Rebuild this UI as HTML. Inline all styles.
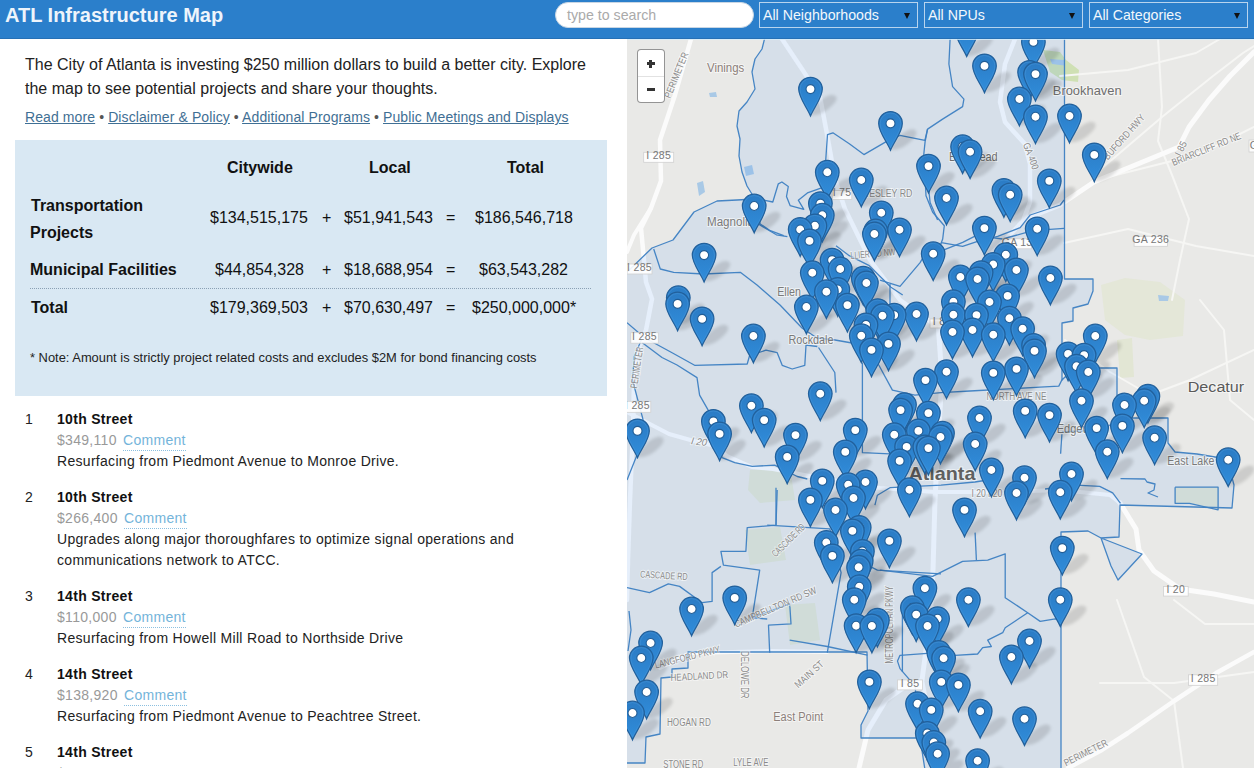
<!DOCTYPE html>
<html><head><meta charset="utf-8">
<style>
*{box-sizing:border-box;margin:0;padding:0}
html,body{width:1254px;height:768px;overflow:hidden;background:#fff;font-family:"Liberation Sans",sans-serif;color:#222}
#hdr{position:absolute;left:0;top:0;width:1254px;height:39px;background:#2b7fcb;z-index:5}
#title{position:absolute;left:5px;top:3px;font-size:20px;font-weight:bold;color:#eef4fb;line-height:24px}
#search{position:absolute;left:555px;top:2px;width:199px;height:26px;border-radius:13px;background:#fff;border:1px solid #c9d6e3;color:#aaa;font-size:14.2px;line-height:24px;padding-left:11px}
.sel{position:absolute;top:2px;height:26px;border:1px solid #b8d4ee;color:#f2f7fc;font-size:14.2px;line-height:24px;padding-left:3px}
.sel b{position:absolute;right:7px;top:10px;width:0;height:0;border-left:3.5px solid transparent;border-right:3.5px solid transparent;border-top:6.5px solid #111}
#left{position:absolute;left:0;top:39px;width:627px;height:729px;overflow:hidden;background:#fff}
#intro{position:absolute;left:25px;top:14px;width:580px;font-size:16px;line-height:24px;color:#222}
#links{position:absolute;left:25px;top:69px;font-size:14px;line-height:18px;color:#555;letter-spacing:0.1px}
#links a{color:#3f6f94;text-decoration:underline}
#tbox{position:absolute;left:15px;top:101px;width:592px;height:256px;background:#d9e8f3}
.t{position:absolute;font-size:16px;line-height:20px;color:#111;white-space:nowrap;margin-top:1.5px}
.tb{font-weight:bold}
#dots{position:absolute;left:15px;top:148px;width:561px;height:0;border-top:1px dotted #8aa0b4}
#note{position:absolute;left:15px;top:210px;font-size:12.9px;color:#222;white-space:nowrap}
.item{position:absolute;left:25px;margin-top:1px;font-size:14px;letter-spacing:0.3px;line-height:21px;color:#222;white-space:nowrap}
.item .n{position:absolute;left:0;top:0}
.item .c{position:absolute;left:32px;top:0}
.item .nm{font-weight:bold;color:#111}
.item .pr{color:#999}
.item .cm{color:#74b4da;border-bottom:1px dotted #8cc0e0;padding-bottom:2px;margin-left:2px}
#map{position:absolute;left:627px;top:39px;width:627px;height:729px;overflow:hidden;background:#e4e4e2}
#zc{position:absolute;left:10px;top:10px;width:28px;height:54px;background:#fff;border:1px solid rgba(0,0,0,0.42);border-radius:4px}
#zc .dv{position:absolute;left:0;top:26px;width:26px;height:1px;background:#e2e2e2}
#zc .h{position:absolute;background:#333;width:8px;height:2.6px}
#zc .v{position:absolute;background:#333;width:2.6px;height:8px}
#hdr:after{content:"";position:absolute;left:0;bottom:0;width:1254px;height:1px;background:#2670b5}
#mtop{position:absolute;left:0;top:0;width:627px;height:1px;background:#d4ecfa;opacity:0.8}

</style></head><body>
<div id="hdr">
  <div id="title">ATL Infrastructure Map</div>
  <div id="search">type to search</div>
  <div class="sel" style="left:759px;width:159px">All Neighborhoods<b></b></div>
  <div class="sel" style="left:924px;width:159px">All NPUs<b></b></div>
  <div class="sel" style="left:1089px;width:159px">All Categories<b></b></div>
</div>
<div id="left">
  <div id="intro">The City of Atlanta is investing $250 million dollars to build a better city. Explore the map to see potential projects and share your thoughts.</div>
  <div id="links"><a>Read more</a> &bull; <a>Disclaimer &amp; Policy</a> &bull; <a>Additional Programs</a> &bull; <a>Public Meetings and Displays</a></div>
  <div id="tbox">
    <div class="t tb" style="left:212px;top:16.5px">Citywide</div>
    <div class="t tb" style="left:354px;top:16.5px">Local</div>
    <div class="t tb" style="left:492px;top:16.5px">Total</div>
    <div class="t tb" style="left:16px;top:54px">Transportation</div>
    <div class="t tb" style="left:15px;top:81px">Projects</div>
    <div class="t" style="left:195px;top:66.5px">$134,515,175</div>
    <div class="t" style="left:307px;top:66.5px">+</div>
    <div class="t" style="left:329px;top:66.5px">$51,941,543</div>
    <div class="t" style="left:431px;top:66.5px">=</div>
    <div class="t" style="left:460px;top:66.5px">$186,546,718</div>
    <div class="t tb" style="left:15px;top:118px">Municipal Facilities</div>
    <div class="t" style="left:200px;top:118px">$44,854,328</div>
    <div class="t" style="left:307px;top:118px">+</div>
    <div class="t" style="left:329px;top:118px">$18,688,954</div>
    <div class="t" style="left:431px;top:118px">=</div>
    <div class="t" style="left:464px;top:118px">$63,543,282</div>
    <div id="dots"></div>
    <div class="t tb" style="left:16px;top:156px">Total</div>
    <div class="t" style="left:195px;top:156px">$179,369,503</div>
    <div class="t" style="left:307px;top:156px">+</div>
    <div class="t" style="left:329px;top:156px">$70,630,497</div>
    <div class="t" style="left:431px;top:156px">=</div>
    <div class="t" style="left:457px;top:156px">$250,000,000*</div>
    <div id="note">* Note: Amount is strictly project related costs and excludes $2M for bond financing costs</div>
  </div>
  <div class="item" style="top:369px"><span class="n">1</span><div class="c"><div class="nm">10th Street</div><div><span class="pr">$349,110</span> <span class="cm">Comment</span></div><div>Resurfacing from Piedmont Avenue to Monroe Drive.</div></div></div>
  <div class="item" style="top:447px"><span class="n">2</span><div class="c"><div class="nm">10th Street</div><div><span class="pr">$266,400</span> <span class="cm">Comment</span></div><div>Upgrades along major thoroughfares to optimize signal operations and</div><div>communications network to ATCC.</div></div></div>
  <div class="item" style="top:546px"><span class="n">3</span><div class="c"><div class="nm">14th Street</div><div><span class="pr">$110,000</span> <span class="cm">Comment</span></div><div>Resurfacing from Howell Mill Road to Northside Drive</div></div></div>
  <div class="item" style="top:624px"><span class="n">4</span><div class="c"><div class="nm">14th Street</div><div><span class="pr">$138,920</span> <span class="cm">Comment</span></div><div>Resurfacing from Piedmont Avenue to Peachtree Street.</div></div></div>
  <div class="item" style="top:702px"><span class="n">5</span><div class="c"><div class="nm">14th Street</div><div><span class="pr">$88,274</span> <span class="cm">Comment</span></div><div>Resurfacing from Piedmont Avenue to Peachtree Street.</div></div></div>
</div>

<div id="map">
<svg width="627" height="729" viewBox="627 39 627 729" style="position:absolute;left:0;top:0">
<defs>
<linearGradient id="pg" x1="0" y1="0" x2="0" y2="1"><stop offset="0" stop-color="#2b7bc4"/><stop offset="1" stop-color="#308ddb"/></linearGradient>
<filter id="blur" x="-50%" y="-50%" width="200%" height="200%"><feGaussianBlur stdDeviation="1.8"/></filter>
<g id="mk"><path d="M0,26.8 C-3.5,18.5 -11.8,8.5 -11.8,0 A11.8,11.8 0 0,1 11.8,0 C11.8,8.5 3.5,18.5 0,26.8 Z" fill="url(#pg)" stroke="#22609b" stroke-width="1.25"/><path d="M0,24.2 C-3.2,17 -10.4,8 -10.4,0 A10.4,10.4 0 0,1 10.4,0 C10.4,8 3.2,17 0,24.2 Z" fill="none" stroke="#4d9be0" stroke-width="0.9" stroke-opacity="0.45"/><circle cx="0" cy="0" r="4.5" fill="#fff" stroke="#215d96" stroke-width="1.1"/></g>
<g id="sh"><path d="M-1,26 C6,27 14,25 24,14 C28,9 26,5 20,6 C12,8 4,16 -1,26 Z" fill="#000" fill-opacity="0.12"/></g>
</defs>
<rect x="627" y="39" width="627" height="729" fill="#e9e9e7"/>
<polygon points="1175,487 1218,487 1218,509 1189,503 1175,503" fill="#e2e6d4"/>
<polygon points="750,470 790,468 795,500 760,503 748,490" fill="#e2e6d4"/>
<polygon points="745,530 780,527 786,560 750,565" fill="#e2e6d4"/>
<polygon points="785,605 815,603 820,640 790,645" fill="#e2e6d4"/>
<polygon points="1043,50 1060,52 1066,60 1079,70 1078,82 1062,80 1050,72" fill="#cfe0b4"/>
<polygon points="1101,285 1125,278 1160,282 1185,300 1183,336 1150,340 1125,335 1105,320" fill="#e4e7d8"/>
<polygon points="1117,340 1132,338 1134,377 1120,378" fill="#e2e6d4"/>
<polygon points="697,183 703,181 705,192 699,196" fill="#a9c9e6"/>
<polygon points="709,93 716,92 717,97 710,97" fill="#a9c9e6"/>
<polygon points="744,167 752,165 754,174 746,176" fill="#a9c9e6"/>
<polygon points="1050,59 1064,60 1064,65.5 1052,64" fill="#a9c9e6"/>
<polygon points="1158,295 1169,296 1168,301 1159,301" fill="#a9c9e6"/>
<polyline points="1094,175 1162,117 1213,76 1243,53 1254,46" fill="none" stroke="#f6f6f4" stroke-width="2" stroke-linejoin="round" stroke-linecap="round"/>
<polyline points="1104,178 1172,161 1206,151 1254,127" fill="none" stroke="#f6f6f4" stroke-width="2" stroke-linejoin="round" stroke-linecap="round"/>
<polyline points="1158,39 1162,107 1158,141 1172,175 1189,219 1180,260 1172,300" fill="none" stroke="#f6f6f4" stroke-width="2" stroke-linejoin="round" stroke-linecap="round"/>
<polyline points="1060,76 1128,70 1196,53 1220,39" fill="none" stroke="#f6f6f4" stroke-width="2" stroke-linejoin="round" stroke-linecap="round"/>
<polyline points="1064,243 1128,229 1196,246 1254,256" fill="none" stroke="#f6f6f4" stroke-width="2" stroke-linejoin="round" stroke-linecap="round"/>
<polyline points="1117,600 1144,677 1174,701 1183,768" fill="none" stroke="#f6f6f4" stroke-width="2" stroke-linejoin="round" stroke-linecap="round"/>
<polyline points="1100,683 1174,683 1254,672" fill="none" stroke="#f6f6f4" stroke-width="2" stroke-linejoin="round" stroke-linecap="round"/>
<polyline points="1174,600 1205,624 1254,624" fill="none" stroke="#f6f6f4" stroke-width="2" stroke-linejoin="round" stroke-linecap="round"/>
<polyline points="1065,340 1110,372 1150,395 1190,380 1254,350" fill="none" stroke="#f6f6f4" stroke-width="2" stroke-linejoin="round" stroke-linecap="round"/>
<polyline points="1200,300 1224,330 1230,400 1254,420" fill="none" stroke="#f6f6f4" stroke-width="2" stroke-linejoin="round" stroke-linecap="round"/>
<polyline points="691,39 675,95 660,140 661,181 651,208 641,228 646,282 652,299 646,330 638,350 634,380 633,430 630,500 628,560 627,600" fill="none" stroke="#fbfbfb" stroke-width="4.5" stroke-linejoin="round" stroke-linecap="round"/>
<polyline points="651,208 634,235 627,252" fill="none" stroke="#fbfbfb" stroke-width="4" stroke-linejoin="round" stroke-linecap="round"/>
<polyline points="782,39 802,69 820,97 827,134 835,179 845,209 870,260 900,300 935,325" fill="none" stroke="#fbfbfb" stroke-width="4.5" stroke-linejoin="round" stroke-linecap="round"/>
<polyline points="1015,39 1005,64 1000,102 1005,122 1025,144 1030,164 1030,202 1023,221 1000,245 975,270 955,300 940,325" fill="none" stroke="#fbfbfb" stroke-width="4.5" stroke-linejoin="round" stroke-linecap="round"/>
<polyline points="1254,52 1230,76 1209,100 1189,127 1179,147 1128,168 1094,182 1060,205 1025,219" fill="none" stroke="#fbfbfb" stroke-width="5" stroke-linejoin="round" stroke-linecap="round"/>
<polyline points="938,322 942,380 938,440 935,500 933,570 930,620 922,680 903,688 886,700 868,730 859,768" fill="none" stroke="#fbfbfb" stroke-width="5" stroke-linejoin="round" stroke-linecap="round"/>
<polyline points="922,680 930,720 935,768" fill="none" stroke="#fbfbfb" stroke-width="4" stroke-linejoin="round" stroke-linecap="round"/>
<polyline points="627,412 648,423 669,434 694,441 715,446 727,456 752,467 773,469 820,478 880,488 935,492 1000,492 1060,490 1110,495 1120,503" fill="none" stroke="#fbfbfb" stroke-width="4" stroke-linejoin="round" stroke-linecap="round"/>
<polyline points="1120,503 1136,529 1139,550 1154,571 1180,589 1214,594 1254,602" fill="none" stroke="#fbfbfb" stroke-width="5" stroke-linejoin="round" stroke-linecap="round"/>
<polyline points="1068,768 1100,751 1128,733 1174,701 1218,672 1254,652" fill="none" stroke="#fbfbfb" stroke-width="4.5" stroke-linejoin="round" stroke-linecap="round"/>
<polyline points="660,668 690,653 770,651 827,652" fill="none" stroke="#fbfbfb" stroke-width="4" stroke-linejoin="round" stroke-linecap="round"/>
<polygon points="765,37 1064.5,37 1064.5,279 1093,279 1093,291 1088,304 1073,308 1073,321 1062,323 1062,380 1065,377 1100,368 1117,368 1117,418 1168,418 1168,443 1175,452 1197,454 1227,459 1234,485 1232,508 1120,505 1119,537 1101,538 1142,554 1118,580 1111,566 1101,538 1088,531 1061,532 1061,770 925,770 920,738 861,738 861,725 868,711 867,652 688,652 688,668 672,669 672,677 661,678 660,734 646,737 645,763 625,763 625,274 652,248 673,240 694,212 717,201 737,200 755,199 747,186 742,172 739,156 740,139 737,126 739,111 747,102 755,89 752,72 755,59 762,49 765,37" fill="#3388ff" fill-opacity="0.1" stroke="none"/>
<polyline points="765,37 1064.5,37 1064.5,279 1093,279 1093,291 1088,304 1073,308 1073,321 1062,323 1062,380 1065,377 1100,368 1117,368 1117,418 1168,418 1168,443 1175,452 1197,454 1227,459 1234,485 1232,508 1120,505 1119,537 1101,538 1142,554 1118,580 1111,566 1101,538 1088,531 1061,532 1061,770 925,770 920,738 861,738 861,725 868,711 867,652 688,652 688,668 672,669 672,677 661,678 660,734 646,737 645,763 625,763 625,274 652,248 673,240 694,212 717,201 737,200 755,199 747,186 742,172 739,156 740,139 737,126 739,111 747,102 755,89 752,72 755,59 762,49 765,37 765,37" fill="none" stroke="#3d7fc2" stroke-width="1.3" stroke-opacity="0.95" stroke-linejoin="round"/>
<polyline points="763.7,200.2 772.8,202 778.3,183.8 781.9,182 788.3,186.5 786.5,196.5 790.1,205.6 803.8,209.3 798.3,200.2 807.4,192.9 820.2,188.3 826,187" fill="none" stroke="#3d7fc2" stroke-width="1.3" stroke-opacity="0.95" stroke-linejoin="round"/>
<polyline points="825.6,190 825.6,161.9 827.5,134.6 832.9,132.8 849.3,143.7 863.9,154.6 885.8,141.9 899.9,135.4 924.9,140.4 927.5,129.1" fill="none" stroke="#3d7fc2" stroke-width="1.3" stroke-opacity="0.95" stroke-linejoin="round"/>
<polyline points="758.2,223.9 776.4,234.8 787.4,236.6" fill="none" stroke="#3d7fc2" stroke-width="1.3" stroke-opacity="0.95" stroke-linejoin="round"/>
<polyline points="653.7,249 660.3,269 673.7,272.3 703.7,274 740.3,272.3 757,285 780,305 802,328 817,338 835,340 852,343" fill="none" stroke="#3d7fc2" stroke-width="1.3" stroke-opacity="0.95" stroke-linejoin="round"/>
<polyline points="753.7,205.7 760.3,224 770.3,230.7 783.7,235.7" fill="none" stroke="#3d7fc2" stroke-width="1.3" stroke-opacity="0.95" stroke-linejoin="round"/>
<polyline points="950.1,39 948.9,64 952.6,86.6 963.9,99.1 962.6,106.6 942.6,119.1 927.6,129.1 925.1,141.6 923.8,154.2 926,195.7 932.7,212.3 944.3,225.7 942.7,239 937.7,252.3 942.7,255.7" fill="none" stroke="#3d7fc2" stroke-width="1.3" stroke-opacity="0.95" stroke-linejoin="round"/>
<polyline points="937.7,252.3 962.7,242.3 976,235.7 1002.7,239 1032.7,230.7 1064,228.3" fill="none" stroke="#3d7fc2" stroke-width="1.3" stroke-opacity="0.95" stroke-linejoin="round"/>
<polyline points="836,245.7 849.3,255.7 869.3,265.7 891,287.3 902.7,295" fill="none" stroke="#3d7fc2" stroke-width="1.3" stroke-opacity="0.95" stroke-linejoin="round"/>
<polyline points="880,280.1 900,286.4 920.1,262.6 928.8,247.6" fill="none" stroke="#3d7fc2" stroke-width="1.3" stroke-opacity="0.95" stroke-linejoin="round"/>
<polyline points="890,284 890,305" fill="none" stroke="#3d7fc2" stroke-width="1.3" stroke-opacity="0.95" stroke-linejoin="round"/>
<polyline points="627,322.7 644.5,337.7 672.1,352.7 694.6,365.3 747.2,364 749.7,355.3 766,350.2 777.2,352.7 782.2,365.3 792.2,369 804.8,365.3 806,345.2 817.3,346.5" fill="none" stroke="#3d7fc2" stroke-width="1.3" stroke-opacity="0.95" stroke-linejoin="round"/>
<polyline points="818.5,347.5 834.8,372.5 836,392.6" fill="none" stroke="#3d7fc2" stroke-width="1.3" stroke-opacity="0.95" stroke-linejoin="round"/>
<polyline points="862.4,362.5 862.4,452.7 889.9,453.9" fill="none" stroke="#3d7fc2" stroke-width="1.3" stroke-opacity="0.95" stroke-linejoin="round"/>
<polyline points="877.4,362.5 892.4,390.1 914.9,395.1 941,392.6 970,391 1040,387.2 1058.8,386.1 1062.1,379.5" fill="none" stroke="#3d7fc2" stroke-width="1.3" stroke-opacity="0.95" stroke-linejoin="round"/>
<polyline points="642,342.5 662,357.5 677,365 697,377.6 699.6,395.1 709.6,412.6 719.6,450.2 722.1,457.7 734.7,462.7 752.2,466.4 774.7,465.2 797.3,476.5 807.3,479" fill="none" stroke="#3d7fc2" stroke-width="1.3" stroke-opacity="0.95" stroke-linejoin="round"/>
<polyline points="641.6,339.3 634.3,356.6 632.5,380 643,419.4 636.6,456.1 627,480" fill="none" stroke="#3d7fc2" stroke-width="1.3" stroke-opacity="0.95" stroke-linejoin="round"/>
<polyline points="776,487.7 776,525" fill="none" stroke="#3d7fc2" stroke-width="1.3" stroke-opacity="0.95" stroke-linejoin="round"/>
<polyline points="874.9,505.2 877.4,495.2 889.9,487.7 941,485.2 975,482 1000,478" fill="none" stroke="#3d7fc2" stroke-width="1.3" stroke-opacity="0.95" stroke-linejoin="round"/>
<polyline points="777.2,490 776,525.1 747.2,527.6 745.9,551.3 720.9,551.3 723.4,565.1 759.7,570.1 752.2,617.7 767.2,619" fill="none" stroke="#3d7fc2" stroke-width="1.3" stroke-opacity="0.95" stroke-linejoin="round"/>
<polyline points="767.2,525.1 829.8,528.8 841.1,572.6 827.3,652.7" fill="none" stroke="#3d7fc2" stroke-width="1.3" stroke-opacity="0.95" stroke-linejoin="round"/>
<polyline points="720.9,566.4 712.1,572.6 712.1,601.4 702.1,602.7 679.6,586.4 668.3,583.9 649.5,592.7 627,587.6" fill="none" stroke="#3d7fc2" stroke-width="1.3" stroke-opacity="0.95" stroke-linejoin="round"/>
<polyline points="752.2,617.7 789.7,603.9 791,623.9 768.5,625.2 769.7,652.7" fill="none" stroke="#3d7fc2" stroke-width="1.3" stroke-opacity="0.95" stroke-linejoin="round"/>
<polyline points="789.7,640.2 827.3,646.5 867.4,655.2" fill="none" stroke="#3d7fc2" stroke-width="1.3" stroke-opacity="0.95" stroke-linejoin="round"/>
<polyline points="867.4,565.1 877.4,570.1 941,573.9" fill="none" stroke="#3d7fc2" stroke-width="1.3" stroke-opacity="0.95" stroke-linejoin="round"/>
<polyline points="902.4,615.2 902.4,672" fill="none" stroke="#3d7fc2" stroke-width="1.3" stroke-opacity="0.95" stroke-linejoin="round"/>
<polyline points="880,570.1 932.6,576.4 962.6,561.4 987.7,560.1 1005.2,553.8 1005.2,597.7 1027.7,612.7 1040.2,621.4 1055.3,618.9 1060.3,620.2" fill="none" stroke="#3d7fc2" stroke-width="1.3" stroke-opacity="0.95" stroke-linejoin="round"/>
<polyline points="975.1,532.6 976.4,560.1" fill="none" stroke="#3d7fc2" stroke-width="1.3" stroke-opacity="0.95" stroke-linejoin="round"/>
<polyline points="1027.7,612.7 1005.2,627.7 1002.7,632.7 987.7,640.2 991.4,646.5 982.7,647.7 977.6,654 955.1,655.3 937.6,652.7 900,655.3 897.5,661.1 900,668.6 915.1,686.1 920.1,738.7" fill="none" stroke="#3d7fc2" stroke-width="1.3" stroke-opacity="0.95" stroke-linejoin="round"/>
<polyline points="1045,489 1076.2,485.1 1099.7,486.4 1112.7,492.9 1120.5,503.3" fill="none" stroke="#3d7fc2" stroke-width="1.3" stroke-opacity="0.95" stroke-linejoin="round"/>
<polyline points="1175.1,487.2 1218.1,487.2 1218.1,509.8 1189.5,503.3 1175.1,503.3 1175.1,487.2" fill="none" stroke="#3d7fc2" stroke-width="1.3" stroke-opacity="0.95" stroke-linejoin="round"/>
<polyline points="1120.5,478.6 1145,479 1147,482 1155,484 1154,490 1148,493 1158,497" fill="none" stroke="#3d7fc2" stroke-width="1.3" stroke-opacity="0.95" stroke-linejoin="round"/>
<polyline points="1061.9,434.3 1060.6,453.8" fill="none" stroke="#3d7fc2" stroke-width="1.3" stroke-opacity="0.95" stroke-linejoin="round"/>
<polyline points="1062,432 1100,430 1120,420 1130,418" fill="none" stroke="#3d7fc2" stroke-width="1.3" stroke-opacity="0.95" stroke-linejoin="round"/>
<polyline points="629,611 631,630 628,651" fill="none" stroke="#3d7fc2" stroke-width="1.3" stroke-opacity="0.95" stroke-linejoin="round"/>
<polyline points="928.8,190 930.1,202.5 937.6,220" fill="none" stroke="#3d7fc2" stroke-width="1.3" stroke-opacity="0.95" stroke-linejoin="round"/>
<polyline points="941.3,242.6 962.6,246.3 977.6,241.3 997.7,236.3 1020.2,227.6 1030.2,215 1060.3,205 1064,200" fill="none" stroke="#3d7fc2" stroke-width="1.3" stroke-opacity="0.95" stroke-linejoin="round"/>
<rect x="643.7" y="152.3" width="30" height="10" fill="#fff" fill-opacity="0.9" stroke="#d0d0d0" stroke-width="0.8"/>
<text x="658.7" y="159.1" font-family="Liberation Sans" font-size="10.5" fill="#777" text-anchor="middle" letter-spacing="0.3">I 285</text>
<rect x="627" y="264" width="25" height="10" fill="#fff" fill-opacity="0.9" stroke="#d0d0d0" stroke-width="0.8"/>
<text x="639.5" y="270.8" font-family="Liberation Sans" font-size="10.5" fill="#777" text-anchor="middle" letter-spacing="0.3">I 285</text>
<rect x="630.8" y="332.7" width="27.5" height="10.5" fill="#fff" fill-opacity="0.9" stroke="#d0d0d0" stroke-width="0.8"/>
<text x="644.55" y="340" font-family="Liberation Sans" font-size="10.5" fill="#777" text-anchor="middle" letter-spacing="0.3">I 285</text>
<rect x="624" y="401.3" width="26.8" height="11" fill="#fff" fill-opacity="0.9" stroke="#d0d0d0" stroke-width="0.8"/>
<text x="637.4" y="409.1" font-family="Liberation Sans" font-size="10.5" fill="#777" text-anchor="middle" letter-spacing="0.3">I 285</text>
<rect x="832.3" y="190.5" width="19.5" height="9" fill="#fff" fill-opacity="0.9" stroke="#d0d0d0" stroke-width="0.8"/>
<text x="842.05" y="196.3" font-family="Liberation Sans" font-size="10.5" fill="#777" text-anchor="middle" letter-spacing="0.3">I 75</text>
<rect x="1002.7" y="238.8" width="28.8" height="10" fill="#fff" fill-opacity="0.9" stroke="#d0d0d0" stroke-width="0.8"/>
<text x="1017.1" y="245.6" font-family="Liberation Sans" font-size="10.5" fill="#777" text-anchor="middle" letter-spacing="0.3">GA 13</text>
<rect x="1134.1" y="236.3" width="33.3" height="10" fill="#fff" fill-opacity="0.9" stroke="#d0d0d0" stroke-width="0.8"/>
<text x="1150.75" y="243.1" font-family="Liberation Sans" font-size="10.5" fill="#777" text-anchor="middle" letter-spacing="0.3">GA 236</text>
<rect x="1163.4" y="586.6" width="24.8" height="9.5" fill="#fff" fill-opacity="0.9" stroke="#d0d0d0" stroke-width="0.8"/>
<text x="1175.8" y="592.9" font-family="Liberation Sans" font-size="10.5" fill="#777" text-anchor="middle" letter-spacing="0.3">I 20</text>
<rect x="1188.6" y="674.8" width="29.1" height="10.5" fill="#fff" fill-opacity="0.9" stroke="#d0d0d0" stroke-width="0.8"/>
<text x="1203.15" y="682.1" font-family="Liberation Sans" font-size="10.5" fill="#777" text-anchor="middle" letter-spacing="0.3">I 285</text>
<rect x="897.5" y="679.9" width="25.1" height="10" fill="#fff" fill-opacity="0.9" stroke="#d0d0d0" stroke-width="0.8"/>
<text x="910.05" y="686.7" font-family="Liberation Sans" font-size="10.5" fill="#777" text-anchor="middle" letter-spacing="0.3">I 85</text>
<rect x="930" y="319" width="18" height="9" fill="#fff" fill-opacity="0.9" stroke="#d0d0d0" stroke-width="0.8"/>
<text x="939" y="324.8" font-family="Liberation Sans" font-size="10.5" fill="#777" text-anchor="middle" letter-spacing="0.3">I 8</text>
<rect x="1249" y="140" width="10" height="12" fill="#fff" fill-opacity="0.9" stroke="#d0d0d0" stroke-width="0.8"/>
<text x="1254" y="148.8" font-family="Liberation Sans" font-size="10.5" fill="#777" text-anchor="middle" letter-spacing="0.3">G</text>
<text x="707" y="72.3" font-family="Liberation Sans" font-size="12.5" fill="#8c7f7a" stroke="#fff" stroke-width="2" stroke-opacity="0.55" paint-order="stroke"  textLength="37.3" lengthAdjust="spacingAndGlyphs">Vinings</text>
<text x="707" y="225.7" font-family="Liberation Sans" font-size="12.5" fill="#7a7a7a" stroke="#fff" stroke-width="2" stroke-opacity="0.55" paint-order="stroke"  textLength="47" lengthAdjust="spacingAndGlyphs">Magnolia</text>
<text x="777.2" y="296.4" font-family="Liberation Sans" font-size="12" fill="#7a7a7a" stroke="#fff" stroke-width="2" stroke-opacity="0.55" paint-order="stroke"  textLength="23.8" lengthAdjust="spacingAndGlyphs">Ellen</text>
<text x="788.5" y="344" font-family="Liberation Sans" font-size="12" fill="#7a7a7a" stroke="#fff" stroke-width="2" stroke-opacity="0.55" paint-order="stroke"  textLength="45" lengthAdjust="spacingAndGlyphs">Rockdale</text>
<text x="1052.8" y="94.6" font-family="Liberation Sans" font-size="13" fill="#6e6e6e" stroke="#fff" stroke-width="2" stroke-opacity="0.55" paint-order="stroke"  textLength="68.8" lengthAdjust="spacingAndGlyphs">Brookhaven</text>
<text x="948.9" y="160.9" font-family="Liberation Sans" font-size="13" fill="#6e6e6e" stroke="#fff" stroke-width="2" stroke-opacity="0.55" paint-order="stroke"  textLength="48.8" lengthAdjust="spacingAndGlyphs">Buckhead</text>
<text x="1187.7" y="391.9" font-family="Liberation Sans" font-size="15.5" fill="#5a5a5a" stroke="#fff" stroke-width="2" stroke-opacity="0.55" paint-order="stroke"  textLength="56.5" lengthAdjust="spacingAndGlyphs">Decatur</text>
<text x="908.4" y="480.4" font-family="Liberation Sans" font-size="19" fill="#606060" stroke="#fff" stroke-width="2" stroke-opacity="0.55" paint-order="stroke" font-weight="bold" textLength="67" lengthAdjust="spacingAndGlyphs">Atlanta</text>
<text x="1056.7" y="433.3" font-family="Liberation Sans" font-size="12" fill="#7a7a7a" stroke="#fff" stroke-width="2" stroke-opacity="0.55" paint-order="stroke"  textLength="52" lengthAdjust="spacingAndGlyphs">Edgewood</text>
<text x="1167.3" y="464.8" font-family="Liberation Sans" font-size="12" fill="#7a7a7a" stroke="#fff" stroke-width="2" stroke-opacity="0.55" paint-order="stroke"  textLength="47" lengthAdjust="spacingAndGlyphs">East Lake</text>
<text x="773.3" y="721.2" font-family="Liberation Sans" font-size="12.5" fill="#8c7f7a" stroke="#fff" stroke-width="2" stroke-opacity="0.55" paint-order="stroke"  textLength="50" lengthAdjust="spacingAndGlyphs">East Point</text>
<text x="860.9" y="197" font-family="Liberation Sans" font-size="10" fill="#8a8a8a" stroke="#fff" stroke-width="2" stroke-opacity="0.55" paint-order="stroke"  textLength="51.5" lengthAdjust="spacingAndGlyphs">WESLEY RD</text>
<text x="1107.8" y="160.4" font-family="Liberation Sans" font-size="10" fill="#8a8a8a" stroke="#fff" stroke-width="2" stroke-opacity="0.55" paint-order="stroke"  textLength="56.7" lengthAdjust="spacingAndGlyphs" transform="rotate(-48.5 1107.8 160.4)">BUFORD HWY</text>
<text x="1173.5" y="166" font-family="Liberation Sans" font-size="10" fill="#8a8a8a" stroke="#fff" stroke-width="2" stroke-opacity="0.55" paint-order="stroke"  textLength="73.5" lengthAdjust="spacingAndGlyphs" transform="rotate(-22 1173.5 166)">BRIARCLIFF RD NE</text>
<text x="1180.4" y="156.7" font-family="Liberation Sans" font-size="10" fill="#8a8a8a" stroke="#fff" stroke-width="2" stroke-opacity="0.55" paint-order="stroke"  textLength="15" lengthAdjust="spacingAndGlyphs" transform="rotate(-63 1180.4 156.7)">I 85</text>
<text x="1022.7" y="144.2" font-family="Liberation Sans" font-size="10" fill="#8a8a8a" stroke="#fff" stroke-width="2" stroke-opacity="0.55" paint-order="stroke"  textLength="28" lengthAdjust="spacingAndGlyphs" transform="rotate(69 1022.7 144.2)">GA 400</text>
<text x="640" y="577.6" font-family="Liberation Sans" font-size="10" fill="#8a8a8a" stroke="#fff" stroke-width="2" stroke-opacity="0.55" paint-order="stroke"  textLength="47.5" lengthAdjust="spacingAndGlyphs" transform="rotate(3 640 577.6)">CASCADE RD</text>
<text x="775.8" y="557.6" font-family="Liberation Sans" font-size="10" fill="#8a8a8a" stroke="#fff" stroke-width="2" stroke-opacity="0.55" paint-order="stroke"  textLength="42.4" lengthAdjust="spacingAndGlyphs" transform="rotate(-45 775.8 557.6)">CASCADE RD</text>
<text x="735.9" y="627.7" font-family="Liberation Sans" font-size="10" fill="#8a8a8a" stroke="#fff" stroke-width="2" stroke-opacity="0.55" paint-order="stroke"  textLength="88.6" lengthAdjust="spacingAndGlyphs" transform="rotate(-23.3 735.9 627.7)">CAMPBELLTON RD SW</text>
<text x="655.8" y="668.5" font-family="Liberation Sans" font-size="10" fill="#8a8a8a" stroke="#fff" stroke-width="2" stroke-opacity="0.55" paint-order="stroke"  textLength="67" lengthAdjust="spacingAndGlyphs" transform="rotate(-14 655.8 668.5)">LANGFORD PKWY</text>
<text x="670.8" y="681" font-family="Liberation Sans" font-size="10" fill="#8a8a8a" stroke="#fff" stroke-width="2" stroke-opacity="0.55" paint-order="stroke"  textLength="57.5" lengthAdjust="spacingAndGlyphs" transform="rotate(-3 670.8 681)">HEADLAND DR</text>
<text x="667" y="726" font-family="Liberation Sans" font-size="10" fill="#8a8a8a" stroke="#fff" stroke-width="2" stroke-opacity="0.55" paint-order="stroke"  textLength="43.8" lengthAdjust="spacingAndGlyphs">HOGAN RD</text>
<text x="663.3" y="768" font-family="Liberation Sans" font-size="10" fill="#8a8a8a" stroke="#fff" stroke-width="2" stroke-opacity="0.55" paint-order="stroke"  textLength="40" lengthAdjust="spacingAndGlyphs">STONE RD</text>
<text x="733.3" y="766" font-family="Liberation Sans" font-size="10" fill="#8a8a8a" stroke="#fff" stroke-width="2" stroke-opacity="0.55" paint-order="stroke"  textLength="35" lengthAdjust="spacingAndGlyphs">LYLE AVE</text>
<text x="741" y="651" font-family="Liberation Sans" font-size="10" fill="#8a8a8a" stroke="#fff" stroke-width="2" stroke-opacity="0.55" paint-order="stroke"  textLength="47.5" lengthAdjust="spacingAndGlyphs" transform="rotate(90 741 651)">DELOWE DR</text>
<text x="798.3" y="688.5" font-family="Liberation Sans" font-size="10" fill="#8a8a8a" stroke="#fff" stroke-width="2" stroke-opacity="0.55" paint-order="stroke"  textLength="35.3" lengthAdjust="spacingAndGlyphs" transform="rotate(-42 798.3 688.5)">MAIN ST</text>
<text x="893" y="663.5" font-family="Liberation Sans" font-size="10" fill="#8a8a8a" stroke="#fff" stroke-width="2" stroke-opacity="0.55" paint-order="stroke"  textLength="77.5" lengthAdjust="spacingAndGlyphs" transform="rotate(-90 893 663.5)">METROPOLITAN PKWY</text>
<text x="986.4" y="399.6" font-family="Liberation Sans" font-size="10" fill="#8a8a8a" stroke="#fff" stroke-width="2" stroke-opacity="0.55" paint-order="stroke"  textLength="60" lengthAdjust="spacingAndGlyphs">NORTH AVE NE</text>
<text x="670.3" y="99" font-family="Liberation Sans" font-size="10" fill="#8a8a8a" stroke="#fff" stroke-width="2" stroke-opacity="0.55" paint-order="stroke"  textLength="48.6" lengthAdjust="spacingAndGlyphs" transform="rotate(-67.8 670.3 99)">PERIMETER</text>
<text x="637" y="388.8" font-family="Liberation Sans" font-size="10" fill="#8a8a8a" stroke="#fff" stroke-width="2" stroke-opacity="0.55" paint-order="stroke"  textLength="41.8" lengthAdjust="spacingAndGlyphs" transform="rotate(-81.5 637 388.8)">PERIMETER</text>
<text x="1065.9" y="766.4" font-family="Liberation Sans" font-size="10" fill="#8a8a8a" stroke="#fff" stroke-width="2" stroke-opacity="0.55" paint-order="stroke"  textLength="47.8" lengthAdjust="spacingAndGlyphs" transform="rotate(-26.6 1065.9 766.4)">PERIMETER</text>
<text x="850.8" y="259" font-family="Liberation Sans" font-size="10" fill="#8a8a8a" stroke="#fff" stroke-width="2" stroke-opacity="0.55" paint-order="stroke"  textLength="45" lengthAdjust="spacingAndGlyphs" transform="rotate(-5 850.8 259)">LLIER RD NW</text>
<text x="690.8" y="443.9" font-family="Liberation Sans" font-size="10" fill="#8a8a8a" stroke="#fff" stroke-width="2" stroke-opacity="0.55" paint-order="stroke" font-style="italic" textLength="16" lengthAdjust="spacingAndGlyphs" transform="rotate(8 690.8 443.9)">I 20</text>
<text x="971.4" y="496.5" font-family="Liberation Sans" font-size="10" fill="#8a8a8a" stroke="#fff" stroke-width="2" stroke-opacity="0.55" paint-order="stroke"  textLength="31" lengthAdjust="spacingAndGlyphs">I 20 I 20</text>
<g filter="url(#blur)">
<use href="#sh" x="966.7" y="29.7"/>
<use href="#sh" x="1033.4" y="41.9"/>
<use href="#sh" x="984.5" y="65.9"/>
<use href="#sh" x="1029.6" y="72.3"/>
<use href="#sh" x="1035.5" y="74.1"/>
<use href="#sh" x="810.5" y="89.1"/>
<use href="#sh" x="1019.4" y="99"/>
<use href="#sh" x="1069.5" y="116"/>
<use href="#sh" x="1035.5" y="116.8"/>
<use href="#sh" x="890.5" y="123.4"/>
<use href="#sh" x="962.6" y="146.7"/>
<use href="#sh" x="970.1" y="151.7"/>
<use href="#sh" x="1094.3" y="154.9"/>
<use href="#sh" x="928.5" y="166.1"/>
<use href="#sh" x="827.3" y="172.2"/>
<use href="#sh" x="861.3" y="180"/>
<use href="#sh" x="1049.3" y="180.9"/>
<use href="#sh" x="1003.9" y="190.5"/>
<use href="#sh" x="1010.2" y="194.8"/>
<use href="#sh" x="946.5" y="198"/>
<use href="#sh" x="820.4" y="203.6"/>
<use href="#sh" x="754.2" y="206"/>
<use href="#sh" x="881.3" y="212.8"/>
<use href="#sh" x="822.3" y="215.2"/>
<use href="#sh" x="814.9" y="225.8"/>
<use href="#sh" x="984.4" y="228.1"/>
<use href="#sh" x="1037.2" y="228.8"/>
<use href="#sh" x="800.2" y="229.5"/>
<use href="#sh" x="899.5" y="229.8"/>
<use href="#sh" x="875.7" y="231"/>
<use href="#sh" x="874.4" y="234"/>
<use href="#sh" x="809.5" y="240.9"/>
<use href="#sh" x="933.2" y="253.7"/>
<use href="#sh" x="1005.8" y="254.7"/>
<use href="#sh" x="704.1" y="255.1"/>
<use href="#sh" x="832.1" y="260.1"/>
<use href="#sh" x="993.2" y="264.5"/>
<use href="#sh" x="840.2" y="269"/>
<use href="#sh" x="1016.4" y="270"/>
<use href="#sh" x="981.1" y="272.6"/>
<use href="#sh" x="812.3" y="272.8"/>
<use href="#sh" x="960.4" y="277"/>
<use href="#sh" x="1050.4" y="278"/>
<use href="#sh" x="863.3" y="278.3"/>
<use href="#sh" x="977.5" y="279"/>
<use href="#sh" x="866.4" y="283"/>
<use href="#sh" x="837.8" y="289.5"/>
<use href="#sh" x="826.4" y="291.7"/>
<use href="#sh" x="1007.6" y="295.9"/>
<use href="#sh" x="678.3" y="297.7"/>
<use href="#sh" x="953.4" y="301.8"/>
<use href="#sh" x="989.5" y="302"/>
<use href="#sh" x="677.6" y="303.9"/>
<use href="#sh" x="847.4" y="305.1"/>
<use href="#sh" x="806.4" y="307"/>
<use href="#sh" x="877.7" y="310.6"/>
<use href="#sh" x="916.5" y="314"/>
<use href="#sh" x="953.4" y="314.8"/>
<use href="#sh" x="976.5" y="315.1"/>
<use href="#sh" x="894.2" y="315.1"/>
<use href="#sh" x="882.5" y="315.8"/>
<use href="#sh" x="1009.4" y="318.2"/>
<use href="#sh" x="702.1" y="318.9"/>
<use href="#sh" x="866" y="324.9"/>
<use href="#sh" x="1022.6" y="328.8"/>
<use href="#sh" x="972.5" y="330"/>
<use href="#sh" x="952.5" y="332"/>
<use href="#sh" x="993.3" y="334.8"/>
<use href="#sh" x="861.3" y="335.8"/>
<use href="#sh" x="753.4" y="336"/>
<use href="#sh" x="1095.3" y="336"/>
<use href="#sh" x="888.5" y="343.9"/>
<use href="#sh" x="1033.6" y="345.4"/>
<use href="#sh" x="871.5" y="349.9"/>
<use href="#sh" x="1034.5" y="350.9"/>
<use href="#sh" x="1068.1" y="353.9"/>
<use href="#sh" x="1084.1" y="355.1"/>
<use href="#sh" x="1076.5" y="366.3"/>
<use href="#sh" x="1016.5" y="368.9"/>
<use href="#sh" x="946.5" y="371.8"/>
<use href="#sh" x="1088.3" y="372"/>
<use href="#sh" x="993.3" y="372.9"/>
<use href="#sh" x="925.5" y="380.1"/>
<use href="#sh" x="820.3" y="393.8"/>
<use href="#sh" x="1147.9" y="396.3"/>
<use href="#sh" x="1081.5" y="400.8"/>
<use href="#sh" x="1144.2" y="400.8"/>
<use href="#sh" x="904.5" y="404.7"/>
<use href="#sh" x="1124.5" y="405"/>
<use href="#sh" x="751.4" y="405.8"/>
<use href="#sh" x="900.6" y="410.1"/>
<use href="#sh" x="1025.2" y="410.9"/>
<use href="#sh" x="928.4" y="413.1"/>
<use href="#sh" x="1049.5" y="415.1"/>
<use href="#sh" x="979.5" y="418"/>
<use href="#sh" x="764.2" y="420.1"/>
<use href="#sh" x="713.4" y="421.4"/>
<use href="#sh" x="1122.4" y="425.9"/>
<use href="#sh" x="1096.6" y="428.1"/>
<use href="#sh" x="855.3" y="430.1"/>
<use href="#sh" x="637.5" y="430.9"/>
<use href="#sh" x="918.4" y="430.9"/>
<use href="#sh" x="942.5" y="433.2"/>
<use href="#sh" x="719.6" y="433.9"/>
<use href="#sh" x="894.3" y="434.8"/>
<use href="#sh" x="795.5" y="435.1"/>
<use href="#sh" x="940.5" y="437"/>
<use href="#sh" x="1154.6" y="437.8"/>
<use href="#sh" x="975.2" y="444"/>
<use href="#sh" x="906.6" y="446.9"/>
<use href="#sh" x="924.8" y="447"/>
<use href="#sh" x="928.4" y="448.1"/>
<use href="#sh" x="1107.3" y="451.8"/>
<use href="#sh" x="845.3" y="451.9"/>
<use href="#sh" x="787.2" y="456.9"/>
<use href="#sh" x="1228.2" y="459.7"/>
<use href="#sh" x="899.6" y="460.9"/>
<use href="#sh" x="991.4" y="470"/>
<use href="#sh" x="1071.5" y="474"/>
<use href="#sh" x="1024.5" y="477.7"/>
<use href="#sh" x="822.3" y="480.9"/>
<use href="#sh" x="865.5" y="482"/>
<use href="#sh" x="848.2" y="484.7"/>
<use href="#sh" x="909.4" y="489.8"/>
<use href="#sh" x="1060.3" y="492.2"/>
<use href="#sh" x="1016.5" y="493"/>
<use href="#sh" x="853.5" y="498"/>
<use href="#sh" x="810.4" y="499.9"/>
<use href="#sh" x="964.5" y="509.9"/>
<use href="#sh" x="835.5" y="510"/>
<use href="#sh" x="859.2" y="527.5"/>
<use href="#sh" x="852.4" y="530.9"/>
<use href="#sh" x="889.4" y="540.9"/>
<use href="#sh" x="826.3" y="542.5"/>
<use href="#sh" x="1062.3" y="548.1"/>
<use href="#sh" x="862.4" y="551.4"/>
<use href="#sh" x="832.4" y="555.9"/>
<use href="#sh" x="861.2" y="561.1"/>
<use href="#sh" x="858.6" y="567.3"/>
<use href="#sh" x="859.3" y="586.8"/>
<use href="#sh" x="924.9" y="588.2"/>
<use href="#sh" x="734.7" y="597.9"/>
<use href="#sh" x="968.4" y="599.7"/>
<use href="#sh" x="1060.3" y="599.7"/>
<use href="#sh" x="854.3" y="599.8"/>
<use href="#sh" x="912.4" y="607.7"/>
<use href="#sh" x="691.6" y="609"/>
<use href="#sh" x="916.2" y="614.6"/>
<use href="#sh" x="937.6" y="618.7"/>
<use href="#sh" x="877.4" y="620.2"/>
<use href="#sh" x="856.1" y="625.8"/>
<use href="#sh" x="871.9" y="626"/>
<use href="#sh" x="927.5" y="626"/>
<use href="#sh" x="1029.5" y="641"/>
<use href="#sh" x="650.6" y="643"/>
<use href="#sh" x="938.8" y="652.5"/>
<use href="#sh" x="1011.4" y="657"/>
<use href="#sh" x="641.3" y="658"/>
<use href="#sh" x="943.6" y="658.2"/>
<use href="#sh" x="869.4" y="681.9"/>
<use href="#sh" x="941.3" y="681.9"/>
<use href="#sh" x="958.4" y="684.9"/>
<use href="#sh" x="646.6" y="692"/>
<use href="#sh" x="917.5" y="703.7"/>
<use href="#sh" x="931.3" y="709.9"/>
<use href="#sh" x="980.2" y="711.2"/>
<use href="#sh" x="632.5" y="713"/>
<use href="#sh" x="1024.5" y="718.7"/>
<use href="#sh" x="927.3" y="733.4"/>
<use href="#sh" x="933.8" y="742.5"/>
<use href="#sh" x="937.6" y="753.8"/>
<use href="#sh" x="977.6" y="760.8"/>
</g>
<use href="#mk" x="966.7" y="29.7"/>
<use href="#mk" x="1033.4" y="41.9"/>
<use href="#mk" x="984.5" y="65.9"/>
<use href="#mk" x="1029.6" y="72.3"/>
<use href="#mk" x="1035.5" y="74.1"/>
<use href="#mk" x="810.5" y="89.1"/>
<use href="#mk" x="1019.4" y="99"/>
<use href="#mk" x="1069.5" y="116"/>
<use href="#mk" x="1035.5" y="116.8"/>
<use href="#mk" x="890.5" y="123.4"/>
<use href="#mk" x="962.6" y="146.7"/>
<use href="#mk" x="970.1" y="151.7"/>
<use href="#mk" x="1094.3" y="154.9"/>
<use href="#mk" x="928.5" y="166.1"/>
<use href="#mk" x="827.3" y="172.2"/>
<use href="#mk" x="861.3" y="180"/>
<use href="#mk" x="1049.3" y="180.9"/>
<use href="#mk" x="1003.9" y="190.5"/>
<use href="#mk" x="1010.2" y="194.8"/>
<use href="#mk" x="946.5" y="198"/>
<use href="#mk" x="820.4" y="203.6"/>
<use href="#mk" x="754.2" y="206"/>
<use href="#mk" x="881.3" y="212.8"/>
<use href="#mk" x="822.3" y="215.2"/>
<use href="#mk" x="814.9" y="225.8"/>
<use href="#mk" x="984.4" y="228.1"/>
<use href="#mk" x="1037.2" y="228.8"/>
<use href="#mk" x="800.2" y="229.5"/>
<use href="#mk" x="899.5" y="229.8"/>
<use href="#mk" x="875.7" y="231"/>
<use href="#mk" x="874.4" y="234"/>
<use href="#mk" x="809.5" y="240.9"/>
<use href="#mk" x="933.2" y="253.7"/>
<use href="#mk" x="1005.8" y="254.7"/>
<use href="#mk" x="704.1" y="255.1"/>
<use href="#mk" x="832.1" y="260.1"/>
<use href="#mk" x="993.2" y="264.5"/>
<use href="#mk" x="840.2" y="269"/>
<use href="#mk" x="1016.4" y="270"/>
<use href="#mk" x="981.1" y="272.6"/>
<use href="#mk" x="812.3" y="272.8"/>
<use href="#mk" x="960.4" y="277"/>
<use href="#mk" x="1050.4" y="278"/>
<use href="#mk" x="863.3" y="278.3"/>
<use href="#mk" x="977.5" y="279"/>
<use href="#mk" x="866.4" y="283"/>
<use href="#mk" x="837.8" y="289.5"/>
<use href="#mk" x="826.4" y="291.7"/>
<use href="#mk" x="1007.6" y="295.9"/>
<use href="#mk" x="678.3" y="297.7"/>
<use href="#mk" x="953.4" y="301.8"/>
<use href="#mk" x="989.5" y="302"/>
<use href="#mk" x="677.6" y="303.9"/>
<use href="#mk" x="847.4" y="305.1"/>
<use href="#mk" x="806.4" y="307"/>
<use href="#mk" x="877.7" y="310.6"/>
<use href="#mk" x="916.5" y="314"/>
<use href="#mk" x="953.4" y="314.8"/>
<use href="#mk" x="976.5" y="315.1"/>
<use href="#mk" x="894.2" y="315.1"/>
<use href="#mk" x="882.5" y="315.8"/>
<use href="#mk" x="1009.4" y="318.2"/>
<use href="#mk" x="702.1" y="318.9"/>
<use href="#mk" x="866" y="324.9"/>
<use href="#mk" x="1022.6" y="328.8"/>
<use href="#mk" x="972.5" y="330"/>
<use href="#mk" x="952.5" y="332"/>
<use href="#mk" x="993.3" y="334.8"/>
<use href="#mk" x="861.3" y="335.8"/>
<use href="#mk" x="753.4" y="336"/>
<use href="#mk" x="1095.3" y="336"/>
<use href="#mk" x="888.5" y="343.9"/>
<use href="#mk" x="1033.6" y="345.4"/>
<use href="#mk" x="871.5" y="349.9"/>
<use href="#mk" x="1034.5" y="350.9"/>
<use href="#mk" x="1068.1" y="353.9"/>
<use href="#mk" x="1084.1" y="355.1"/>
<use href="#mk" x="1076.5" y="366.3"/>
<use href="#mk" x="1016.5" y="368.9"/>
<use href="#mk" x="946.5" y="371.8"/>
<use href="#mk" x="1088.3" y="372"/>
<use href="#mk" x="993.3" y="372.9"/>
<use href="#mk" x="925.5" y="380.1"/>
<use href="#mk" x="820.3" y="393.8"/>
<use href="#mk" x="1147.9" y="396.3"/>
<use href="#mk" x="1081.5" y="400.8"/>
<use href="#mk" x="1144.2" y="400.8"/>
<use href="#mk" x="904.5" y="404.7"/>
<use href="#mk" x="1124.5" y="405"/>
<use href="#mk" x="751.4" y="405.8"/>
<use href="#mk" x="900.6" y="410.1"/>
<use href="#mk" x="1025.2" y="410.9"/>
<use href="#mk" x="928.4" y="413.1"/>
<use href="#mk" x="1049.5" y="415.1"/>
<use href="#mk" x="979.5" y="418"/>
<use href="#mk" x="764.2" y="420.1"/>
<use href="#mk" x="713.4" y="421.4"/>
<use href="#mk" x="1122.4" y="425.9"/>
<use href="#mk" x="1096.6" y="428.1"/>
<use href="#mk" x="855.3" y="430.1"/>
<use href="#mk" x="637.5" y="430.9"/>
<use href="#mk" x="918.4" y="430.9"/>
<use href="#mk" x="942.5" y="433.2"/>
<use href="#mk" x="719.6" y="433.9"/>
<use href="#mk" x="894.3" y="434.8"/>
<use href="#mk" x="795.5" y="435.1"/>
<use href="#mk" x="940.5" y="437"/>
<use href="#mk" x="1154.6" y="437.8"/>
<use href="#mk" x="975.2" y="444"/>
<use href="#mk" x="906.6" y="446.9"/>
<use href="#mk" x="924.8" y="447"/>
<use href="#mk" x="928.4" y="448.1"/>
<use href="#mk" x="1107.3" y="451.8"/>
<use href="#mk" x="845.3" y="451.9"/>
<use href="#mk" x="787.2" y="456.9"/>
<use href="#mk" x="1228.2" y="459.7"/>
<use href="#mk" x="899.6" y="460.9"/>
<use href="#mk" x="991.4" y="470"/>
<use href="#mk" x="1071.5" y="474"/>
<use href="#mk" x="1024.5" y="477.7"/>
<use href="#mk" x="822.3" y="480.9"/>
<use href="#mk" x="865.5" y="482"/>
<use href="#mk" x="848.2" y="484.7"/>
<use href="#mk" x="909.4" y="489.8"/>
<use href="#mk" x="1060.3" y="492.2"/>
<use href="#mk" x="1016.5" y="493"/>
<use href="#mk" x="853.5" y="498"/>
<use href="#mk" x="810.4" y="499.9"/>
<use href="#mk" x="964.5" y="509.9"/>
<use href="#mk" x="835.5" y="510"/>
<use href="#mk" x="859.2" y="527.5"/>
<use href="#mk" x="852.4" y="530.9"/>
<use href="#mk" x="889.4" y="540.9"/>
<use href="#mk" x="826.3" y="542.5"/>
<use href="#mk" x="1062.3" y="548.1"/>
<use href="#mk" x="862.4" y="551.4"/>
<use href="#mk" x="832.4" y="555.9"/>
<use href="#mk" x="861.2" y="561.1"/>
<use href="#mk" x="858.6" y="567.3"/>
<use href="#mk" x="859.3" y="586.8"/>
<use href="#mk" x="924.9" y="588.2"/>
<use href="#mk" x="734.7" y="597.9"/>
<use href="#mk" x="968.4" y="599.7"/>
<use href="#mk" x="1060.3" y="599.7"/>
<use href="#mk" x="854.3" y="599.8"/>
<use href="#mk" x="912.4" y="607.7"/>
<use href="#mk" x="691.6" y="609"/>
<use href="#mk" x="916.2" y="614.6"/>
<use href="#mk" x="937.6" y="618.7"/>
<use href="#mk" x="877.4" y="620.2"/>
<use href="#mk" x="856.1" y="625.8"/>
<use href="#mk" x="871.9" y="626"/>
<use href="#mk" x="927.5" y="626"/>
<use href="#mk" x="1029.5" y="641"/>
<use href="#mk" x="650.6" y="643"/>
<use href="#mk" x="938.8" y="652.5"/>
<use href="#mk" x="1011.4" y="657"/>
<use href="#mk" x="641.3" y="658"/>
<use href="#mk" x="943.6" y="658.2"/>
<use href="#mk" x="869.4" y="681.9"/>
<use href="#mk" x="941.3" y="681.9"/>
<use href="#mk" x="958.4" y="684.9"/>
<use href="#mk" x="646.6" y="692"/>
<use href="#mk" x="917.5" y="703.7"/>
<use href="#mk" x="931.3" y="709.9"/>
<use href="#mk" x="980.2" y="711.2"/>
<use href="#mk" x="632.5" y="713"/>
<use href="#mk" x="1024.5" y="718.7"/>
<use href="#mk" x="927.3" y="733.4"/>
<use href="#mk" x="933.8" y="742.5"/>
<use href="#mk" x="937.6" y="753.8"/>
<use href="#mk" x="977.6" y="760.8"/>
</svg>
<div id="mtop"></div><div id="zc"><div class="dv"></div><div class="h" style="left:8.7px;top:12.4px"></div><div class="v" style="left:11.4px;top:9.7px"></div><div class="h" style="left:8.7px;top:38.2px"></div></div>
</div>
</body></html>
